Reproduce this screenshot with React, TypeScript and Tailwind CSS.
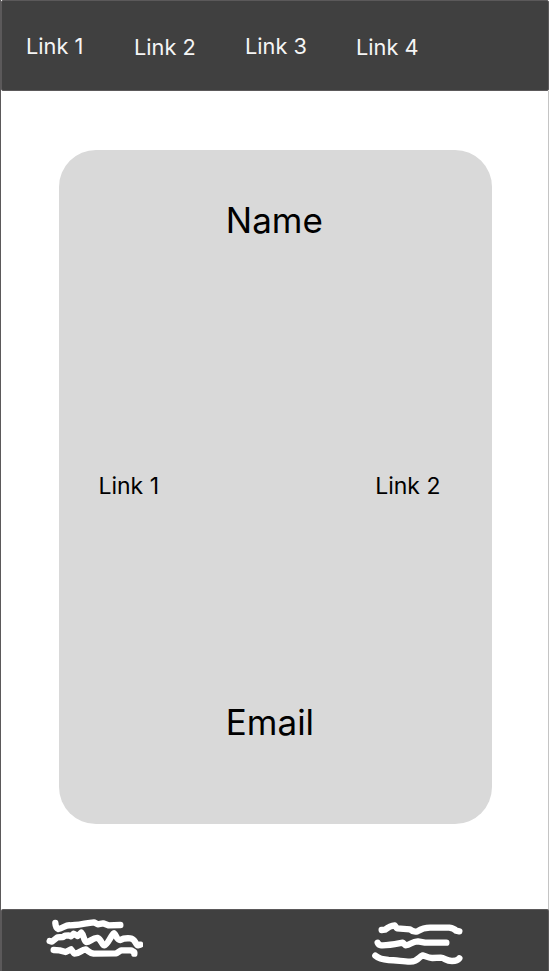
const navLinks = [
  { label: 'Link 1', place: 'w-[108px] pt-[34px]' },
  { label: 'Link 2', place: 'w-[111px] pt-[35px]' },
  { label: 'Link 3', place: 'w-[111px] pt-[34px]' },
  { label: 'Link 4', place: 'w-[111px] pt-[35px]' },
];

function Scribble({ lines, className }: { lines: string[]; className: string }) {
  return (
    <svg
      className={className}
      viewBox="0 0 330 183"
      fill="none"
      stroke="#ffffff"
      strokeWidth="19"
      strokeLinecap="round"
      strokeLinejoin="round"
    >
      {lines.map((d) => (
        <path key={d} d={d} />
      ))}
    </svg>
  );
}

const leftScribble = [
  'M67 39 Q68 54 76 57 C90 54 100 44 111 46 L126 45 C145 45 162 38 183 37 L194 43 L210 40 L226 46 L262 45',
  'M50 93 L57 95 L73 82 L90 81 L96 77 L107 76 L114 79 L122 71 L134 78 L145 68 C154 76 152 95 160 96 C170 97 180 82 194 84 C205 88 207 106 214 106 C225 104 234 75 243 70 C251 76 251 91 262 90 C270 85 280 84 292 85 C307 87 304 97 314 106 L322 104',
  'M62 120 L80 121 L98 126 L114 118 L124 131 C138 132 145 119 158 118 C168 124 170 129 182 131 L250 130 L264 121 L294 121 L304 127 L304 131',
];

const rightScribble = [
  'M65 60 L75 59 Q90 47 104 46 L111 55 L150 58 Q160 67 172 64 Q190 53 210 53 L268 53 Q282 55 288 62 L298 64',
  'M53 98 Q56 105 64 106 C85 107 107 102 128 98 L137 106 C152 106 156 93 174 94 L195 98 L259 98',
  'M46 137 C57 147 70 149 86 150 C108 150 130 155 149 155 C177 156 176 139 188 136 C197 138 205 145 218 144 L242 143 C255 144 257 153 276 153 Q292 153 298 145',
];

export default function App() {
  return (
    <div className="flex h-[971px] w-[549px] flex-col overflow-hidden border-l border-l-[#5b595a] bg-white font-['Inter',sans-serif]">
      <header className="flex h-[91px] shrink-0 rounded-[2px] border border-[#5b595a] bg-[#404040] pl-6 text-[21.75px] leading-[22px] text-[#f5f5f5]">
        {navLinks.map(({ label, place }) => (
          <a key={label} className={`shrink-0 whitespace-nowrap ${place}`}>
            {label}
          </a>
        ))}
      </header>

      <main className="flex grow border-r border-r-[#c4c4c4] pt-[59px] pl-[58.4px]">
        <section className="flex h-[674px] w-[432.6px] flex-col rounded-[37px] bg-[#d9d9d9] text-black">
          <h1 className="pt-[52px] pl-[166.4px] text-[35px] leading-9">Name</h1>
          <div className="mt-[237px] flex justify-between pr-[51.5px] pl-[39px] text-[23px] leading-none">
            <a>Link 1</a>
            <a>Link 2</a>
          </div>
          <p className="mt-[206px] pl-[166.4px] text-[35px] leading-9">Email</p>
        </section>
      </main>

      <footer className="flex h-[62px] shrink-0 rounded-t-[2px] border-x border-t border-[#5b595a] bg-[#404040]">
        <Scribble lines={leftScribble} className="ml-[31.3px] h-[61px] w-[110px] shrink-0" />
        <Scribble lines={rightScribble} className="ml-[216.7px] h-[61px] w-[110px] shrink-0" />
      </footer>
    </div>
  );
}
